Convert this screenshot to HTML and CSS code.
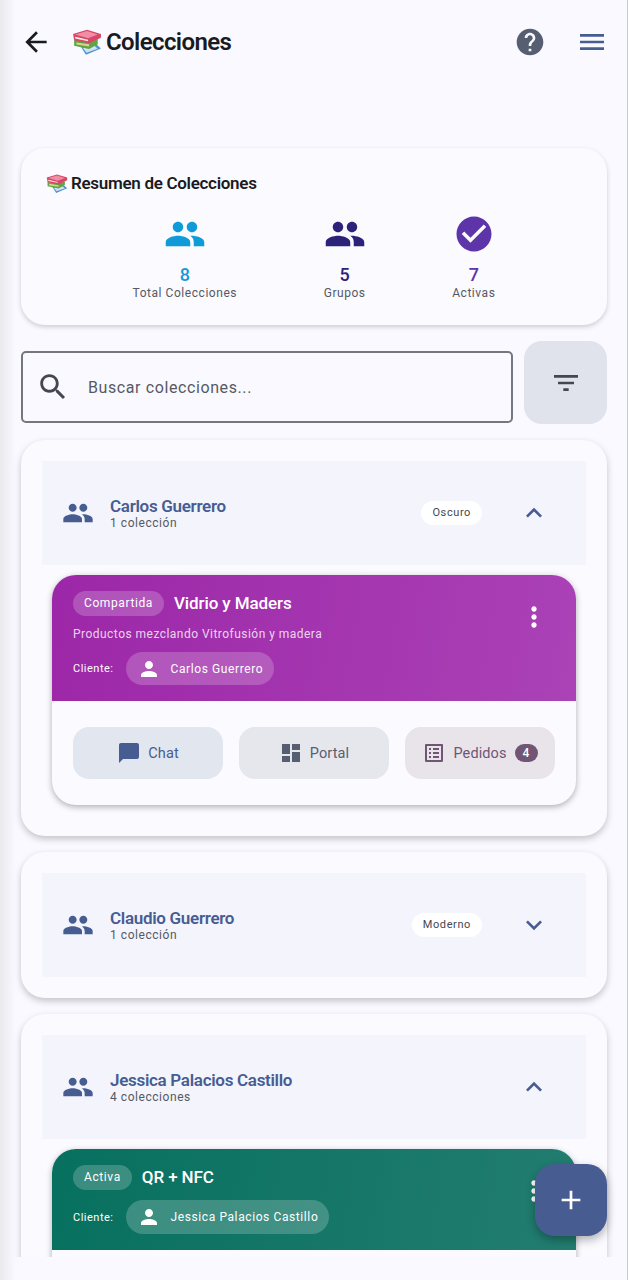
FILE: index.html
```html
<!DOCTYPE html>
<html lang="es">
  <head>
    <meta charset="utf-8">
    <title>Colecciones</title>
    <link rel="stylesheet" href="styles.css">
  </head>
  <body>
    <svg class="sprites" aria-hidden="true">
      <symbol id="i-back" viewBox="0 0 24 24"><path d="M20 11H7.83l5.59-5.59L12 4l-8 8 8 8 1.41-1.41L7.83 13H20v-2z"/></symbol>
      <symbol id="i-help" viewBox="0 0 24 24"><path d="M12 2C6.48 2 2 6.48 2 12s4.48 10 10 10 10-4.48 10-10S17.52 2 12 2zm1 17h-2v-2h2v2zm2.07-7.75l-.9.92C13.45 12.9 13 13.5 13 15h-2v-.5c0-1.1.45-2.1 1.17-2.83l1.24-1.26c.37-.36.59-.86.59-1.41 0-1.1-.9-2-2-2s-2 .9-2 2H8c0-2.21 1.79-4 4-4s4 1.79 4 4c0 .88-.36 1.68-.93 2.25z"/></symbol>
      <symbol id="i-menu" viewBox="0 0 24 24"><path d="M3 18h18v-2H3v2zm0-5h18v-2H3v2zm0-7v2h18V6H3z"/></symbol>
      <symbol id="i-people" viewBox="0 0 24 24"><path d="M16 11c1.66 0 2.99-1.34 2.99-3S17.66 5 16 5c-1.66 0-3 1.34-3 3s1.34 3 3 3zm-8 0c1.66 0 2.99-1.34 2.99-3S9.66 5 8 5C6.34 5 5 6.34 5 8s1.34 3 3 3zm0 2c-2.33 0-7 1.17-7 3.5V19h14v-2.5c0-2.33-4.67-3.5-7-3.5zm8 0c-.29 0-.62.02-.97.05 1.16.84 1.97 1.97 1.97 3.45V19h6v-2.5c0-2.33-4.67-3.5-7-3.5z"/></symbol>
      <symbol id="i-check" viewBox="0 0 24 24"><path d="M12 2C6.48 2 2 6.48 2 12s4.48 10 10 10 10-4.48 10-10S17.52 2 12 2zm-2 15l-5-5 1.41-1.41L10 14.17l7.59-7.59L19 8l-9 9z"/></symbol>
      <symbol id="i-search" viewBox="0 0 24 24"><path d="M15.5 14h-.79l-.28-.27C15.41 12.59 16 11.11 16 9.5 16 5.91 13.09 3 9.5 3S3 5.91 3 9.5 5.91 16 9.5 16c1.61 0 3.09-.59 4.23-1.57l.27.28v.79l5 4.99L20.49 19l-4.99-5zm-6 0C7.01 14 5 11.99 5 9.5S7.01 5 9.5 5 14 7.01 14 9.5 11.99 14 9.5 14z"/></symbol>
      <symbol id="i-filter" viewBox="0 0 24 24"><path d="M10 18h4v-2h-4v2zM3 6v2h18V6H3zm3 7h12v-2H6v2z"/></symbol>
      <symbol id="i-up" viewBox="0 0 24 24"><path d="M12 8l-6 6 1.41 1.41L12 10.83l4.59 4.58L18 14z"/></symbol>
      <symbol id="i-down" viewBox="0 0 24 24"><path d="M16.59 8.59L12 13.17 7.41 8.59 6 10l6 6 6-6z"/></symbol>
      <symbol id="i-more" viewBox="0 0 24 24"><path d="M12 8c1.1 0 2-.9 2-2s-.9-2-2-2-2 .9-2 2 .9 2 2 2zm0 2c-1.1 0-2 .9-2 2s.9 2 2 2 2-.9 2-2-.9-2-2-2zm0 6c-1.1 0-2 .9-2 2s.9 2 2 2 2-.9 2-2-.9-2-2-2z"/></symbol>
      <symbol id="i-person" viewBox="0 0 24 24"><path d="M12 12c2.21 0 4-1.79 4-4s-1.79-4-4-4-4 1.79-4 4 1.79 4 4 4zm0 2c-2.67 0-8 1.34-8 4v2h16v-2c0-2.66-5.33-4-8-4z"/></symbol>
      <symbol id="i-chat" viewBox="0 0 24 24"><path d="M20 2H4c-1.1 0-2 .9-2 2v18l4-4h14c1.1 0 2-.9 2-2V4c0-1.1-.9-2-2-2z"/></symbol>
      <symbol id="i-portal" viewBox="0 0 24 24"><path d="M3 13h8V3H3v10zm0 8h8v-6H3v6zm10 0h8V11h-8v10zm0-18v6h8V3h-8z"/></symbol>
      <symbol id="i-list" viewBox="0 0 24 24"><path d="M19 5v14H5V5h14m1.1-2H3.9c-.5 0-.9.4-.9.9v16.2c0 .4.4.9.9.9h16.2c.4 0 .9-.5.9-.9V3.9c0-.5-.5-.9-.9-.9zM11 7h6v2h-6V7zm0 4h6v2h-6v-2zm0 4h6v2h-6zM7 7h2v2H7zm0 4h2v2H7zm0 4h2v2H7z"/></symbol>
      <symbol id="i-add" viewBox="0 0 24 24"><path d="M19 13h-6v6h-2v-6H5v-2h6V5h2v6h6v2z"/></symbol>
      <symbol id="i-books" viewBox="0 0 28 24">
        <path fill="#4f93cf" d="M8 16l14-2.5 5 4.5-14 6z"/>
        <path fill="#cfe2f3" d="M10 17.4l11-2 3 2.8-10.5 3.8z"/>
        <path fill="#5fa63e" d="M2 10l15 2 7-3v5l-8 4.5L2 15.5z"/>
        <path fill="#d9cfa0" d="M4 12.4l12 1.7v2L4 14.4z"/>
        <path fill="#d9466a" d="M1 4.5L14 .5l13 4v3.5l-11 5.2L2 10.4z"/>
        <path fill="#ef8ea4" d="M3 5L14 1.8l10 3.2-9 3.6z"/>
        <path fill="#f6efdc" d="M3 7.2l12 2.8v1.2L3 8.8z"/>
      </symbol>
    </svg>

    <div class="app">
      <header class="topbar">
        <svg class="ico back"><use href="#i-back"/></svg>
        <h1 class="page-title"><svg class="books"><use href="#i-books"/></svg>Colecciones</h1>
        <svg class="ico help"><use href="#i-help"/></svg>
        <svg class="ico menu"><use href="#i-menu"/></svg>
      </header>

      <main class="content">
        <section class="summary">
          <h2 class="summary-title"><svg class="books small"><use href="#i-books"/></svg>Resumen de Colecciones</h2>
          <div class="stats">
            <div class="stat stat-total">
              <svg class="stat-icon"><use href="#i-people"/></svg>
              <div class="stat-value">8</div>
              <div class="stat-label">Total Colecciones</div>
            </div>
            <div class="stat stat-groups">
              <svg class="stat-icon"><use href="#i-people"/></svg>
              <div class="stat-value">5</div>
              <div class="stat-label">Grupos</div>
            </div>
            <div class="stat stat-active">
              <svg class="stat-icon"><use href="#i-check"/></svg>
              <div class="stat-value">7</div>
              <div class="stat-label">Activas</div>
            </div>
          </div>
        </section>

        <div class="search-row">
          <div class="search">
            <svg class="ico search-icon"><use href="#i-search"/></svg>
            <span class="search-text">Buscar colecciones...</span>
          </div>
          <button class="filter-btn"><svg class="ico filter-icon"><use href="#i-filter"/></svg></button>
        </div>

        <section class="group">
          <div class="group-head">
            <svg class="group-icon"><use href="#i-people"/></svg>
            <div class="group-info">
              <div class="group-name">Carlos Guerrero</div>
              <div class="group-count">1 colección</div>
            </div>
            <span class="theme-chip">Oscuro</span>
            <svg class="ico chevron"><use href="#i-up"/></svg>
          </div>
          <article class="coll">
            <div class="coll-head purple">
              <div class="coll-info">
                <div class="coll-row">
                  <span class="status">Compartida</span>
                  <span class="coll-name">Vidrio y Maders</span>
                </div>
                <div class="coll-desc">Productos mezclando Vitrofusión y madera</div>
                <div class="client-row">
                  <span class="client-label">Cliente:</span>
                  <span class="client-chip"><svg class="person"><use href="#i-person"/></svg>Carlos Guerrero</span>
                </div>
              </div>
              <svg class="ico more"><use href="#i-more"/></svg>
            </div>
            <div class="coll-actions">
              <button class="action chat"><svg class="ico"><use href="#i-chat"/></svg>Chat</button>
              <button class="action portal"><svg class="ico"><use href="#i-portal"/></svg>Portal</button>
              <button class="action orders"><svg class="ico"><use href="#i-list"/></svg>Pedidos<span class="badge">4</span></button>
            </div>
          </article>
        </section>

        <section class="group">
          <div class="group-head">
            <svg class="group-icon"><use href="#i-people"/></svg>
            <div class="group-info">
              <div class="group-name">Claudio Guerrero</div>
              <div class="group-count">1 colección</div>
            </div>
            <span class="theme-chip">Moderno</span>
            <svg class="ico chevron"><use href="#i-down"/></svg>
          </div>
        </section>

        <section class="group">
          <div class="group-head">
            <svg class="group-icon"><use href="#i-people"/></svg>
            <div class="group-info">
              <div class="group-name">Jessica Palacios Castillo</div>
              <div class="group-count">4 colecciones</div>
            </div>
            <svg class="ico chevron"><use href="#i-up"/></svg>
          </div>
          <article class="coll">
            <div class="coll-head green">
              <div class="coll-info">
                <div class="coll-row">
                  <span class="status">Activa</span>
                  <span class="coll-name">QR + NFC</span>
                </div>
                <div class="client-row">
                  <span class="client-label">Cliente:</span>
                  <span class="client-chip"><svg class="person"><use href="#i-person"/></svg>Jessica Palacios Castillo</span>
                </div>
              </div>
              <svg class="ico more"><use href="#i-more"/></svg>
            </div>
            <div class="coll-actions"></div>
          </article>
        </section>
      </main>

      <button class="fab"><svg class="fab-icon"><use href="#i-add"/></svg></button>
    </div>
  </body>
</html>
```

FILE: styles.css
```css
* { box-sizing: border-box; }

body {
  margin: 0;
  background: #f9f9ff;
  color: #1a1b20;
  font-family: Roboto, "Liberation Sans", sans-serif;
}

button {
  border: none;
  font-family: inherit;
}

.sprites { display: none; }

.ico {
  display: block;
  flex: none;
  width: 24px;
  height: 24px;
  fill: currentColor;
}

.app {
  position: relative;
  display: flex;
  flex-direction: column;
  height: 1280px;
  padding-bottom: 23px;
  overflow: hidden;
  background: #f9f9ff;
}

/* drawer shadow on the left, hairline on the right */
.app::before {
  content: "";
  position: absolute;
  top: 0;
  bottom: 0;
  left: 0;
  width: 16px;
  background: linear-gradient(to right, #e9e9ee, #f9f9ff);
}
.app::after {
  content: "";
  position: absolute;
  top: 0;
  right: 0;
  bottom: 0;
  width: 1px;
  background: #c9cad0;
}

/* top bar */
.topbar {
  position: relative;
  display: flex;
  flex: none;
  align-items: center;
  height: 84px;
  padding: 0 20px;
}

.back {
  width: 32px;
  height: 32px;
  color: #1a1b20;
}

.page-title {
  display: flex;
  flex: 1;
  align-items: center;
  margin: 0 0 0 20px;
  font-size: 24px;
  font-weight: 600;
  letter-spacing: -0.6px;
}

.books {
  width: 30px;
  height: 26px;
  margin-right: 4px;
}
.books.small {
  width: 22px;
  height: 19px;
  margin-right: 3px;
}

.help {
  width: 32px;
  height: 32px;
  color: #565e71;
}

.menu {
  width: 32px;
  height: 32px;
  margin-left: 30px;
  color: #475d92;
}

/* page content */
.content {
  position: relative;
  flex: 1;
  min-height: 0;
  padding: 64px 21px 0;
  overflow: hidden;
}

.summary {
  height: 177px;
  padding: 25px 25px 0;
  background: #fafaff;
  border-radius: 24px;
  box-shadow: 0 2px 5px rgba(0, 0, 0, 0.18);
}

.summary-title {
  display: flex;
  align-items: center;
  height: 20px;
  margin: 0;
  font-size: 17px;
  font-weight: 600;
  letter-spacing: -0.3px;
}

.stats {
  display: flex;
  justify-content: space-evenly;
  margin-top: 20px;
}

.stat {
  display: flex;
  flex-direction: column;
  align-items: center;
}

.stat-icon {
  width: 42px;
  height: 42px;
  fill: currentColor;
}

.stat-value {
  margin-top: 10px;
  font-size: 18px;
  font-weight: 500;
  line-height: 20px;
}

.stat-label {
  color: #565962;
  font-size: 12px;
  line-height: 16px;
  letter-spacing: 0.55px;
}

.stat-total { color: #0f9bd8; }
.stat-groups { color: #2d2279; }
.stat-active { color: #5e35a8; }

/* search */
.search-row {
  display: flex;
  gap: 11px;
  align-items: flex-start;
  margin-top: 16px;
}

.search {
  display: flex;
  flex: 1;
  align-items: center;
  height: 72px;
  margin-top: 10px;
  padding-left: 13px;
  border: 2px solid #74777f;
  border-radius: 5px;
}

.search-icon {
  width: 34px;
  height: 34px;
  color: #44474f;
}

.search-text {
  margin-left: 18px;
  color: #565962;
  font-size: 16px;
  letter-spacing: 0.6px;
}

.filter-btn {
  display: flex;
  flex: none;
  align-items: center;
  justify-content: center;
  width: 83px;
  height: 83px;
  color: #44474f;
  background: #e0e2ec;
  border-radius: 18px;
}

.filter-icon {
  width: 32px;
  height: 32px;
}

/* groups */
.group {
  margin-top: 16px;
  padding: 21px;
  background: #fafaff;
  border-radius: 24px;
  box-shadow: 0 3px 7px rgba(0, 0, 0, 0.22);
}

.group-head {
  display: flex;
  align-items: center;
  height: 104px;
  padding: 0 36px 0 20px;
  background: #f3f4fc;
}

.group-icon {
  flex: none;
  width: 32px;
  height: 32px;
  fill: #475d92;
}

.group-info {
  flex: 1;
  margin-left: 16px;
}

.group-name {
  color: #475d92;
  font-size: 17px;
  font-weight: 600;
  line-height: 20px;
  letter-spacing: -0.3px;
}

.group-count {
  color: #565962;
  font-size: 12px;
  line-height: 14px;
  letter-spacing: 0.55px;
}

.theme-chip {
  margin-right: 36px;
  padding: 0 11px;
  color: #44474f;
  font-size: 11px;
  line-height: 24px;
  letter-spacing: 0.6px;
  background: #fff;
  border-radius: 12px;
}

.chevron {
  width: 32px;
  height: 32px;
  color: #475d92;
}

/* collection cards */
.coll {
  margin: 10px;
  overflow: hidden;
  background: #fafaff;
  border-radius: 24px;
  box-shadow: 0 2px 6px rgba(0, 0, 0, 0.3);
}

.coll-head {
  display: flex;
  align-items: flex-start;
  padding: 16px 26px 16px 21px;
  color: #fff;
}

.purple { background: linear-gradient(100deg, #9c27a8, #ab42b6); }
.green { background: linear-gradient(100deg, #07705f, #227d70); }

.coll-info { flex: 1; }

.coll-row {
  display: flex;
  gap: 10px;
  align-items: center;
}

.status {
  padding: 0 11px;
  font-size: 12px;
  font-weight: 450;
  line-height: 25px;
  letter-spacing: 0.6px;
  background: rgba(255, 255, 255, 0.2);
  border-radius: 13px;
}

.coll-name {
  margin-top: -2px;
  font-size: 17px;
  font-weight: 500;
  letter-spacing: -0.1px;
}

.coll-desc {
  margin-top: 10px;
  color: rgba(255, 255, 255, 0.8);
  font-size: 12px;
  line-height: 16px;
  letter-spacing: 0.47px;
}

.client-row {
  display: flex;
  gap: 12px;
  align-items: center;
  margin-top: 10px;
}

.client-label {
  font-size: 11px;
  font-weight: 450;
  letter-spacing: 0.5px;
}

.client-chip {
  display: flex;
  align-items: center;
  height: 33px;
  padding: 0 11px;
  font-size: 12px;
  font-weight: 450;
  letter-spacing: 0.6px;
  background: rgba(255, 255, 255, 0.2);
  border-radius: 17px;
}

.green .client-chip { height: 34px; }

.person {
  width: 24px;
  height: 24px;
  margin-right: 10px;
  fill: #fff;
}

.more {
  width: 32px;
  height: 32px;
  margin-top: 10px;
  color: #fff;
}

.coll-actions {
  display: flex;
  gap: 16px;
  min-height: 104px;
  padding: 26px 21px;
}

.action {
  display: flex;
  flex: 1;
  gap: 7px;
  align-items: center;
  justify-content: center;
  height: 52px;
  font-size: 14.5px;
  letter-spacing: 0.1px;
  border-radius: 16px;
}

.chat { color: #475d92; background: #e2e6ef; }
.portal { color: #565e71; background: #e6e6ed; }
.orders { color: #705575; background: #e9e4ea; }

.badge {
  width: 23px;
  margin-left: 1px;
  color: #fff;
  font-size: 12px;
  font-weight: 500;
  line-height: 18px;
  background: #705575;
  border-radius: 9px;
}

/* floating add button */
.fab {
  position: absolute;
  top: 1164px;
  left: 535px;
  display: flex;
  align-items: center;
  justify-content: center;
  width: 72px;
  height: 72px;
  background: #475d92;
  border-radius: 20px;
  box-shadow: 0 4px 10px rgba(0, 0, 0, 0.3);
}

.fab-icon {
  width: 32px;
  height: 32px;
  fill: #fff;
}
```
